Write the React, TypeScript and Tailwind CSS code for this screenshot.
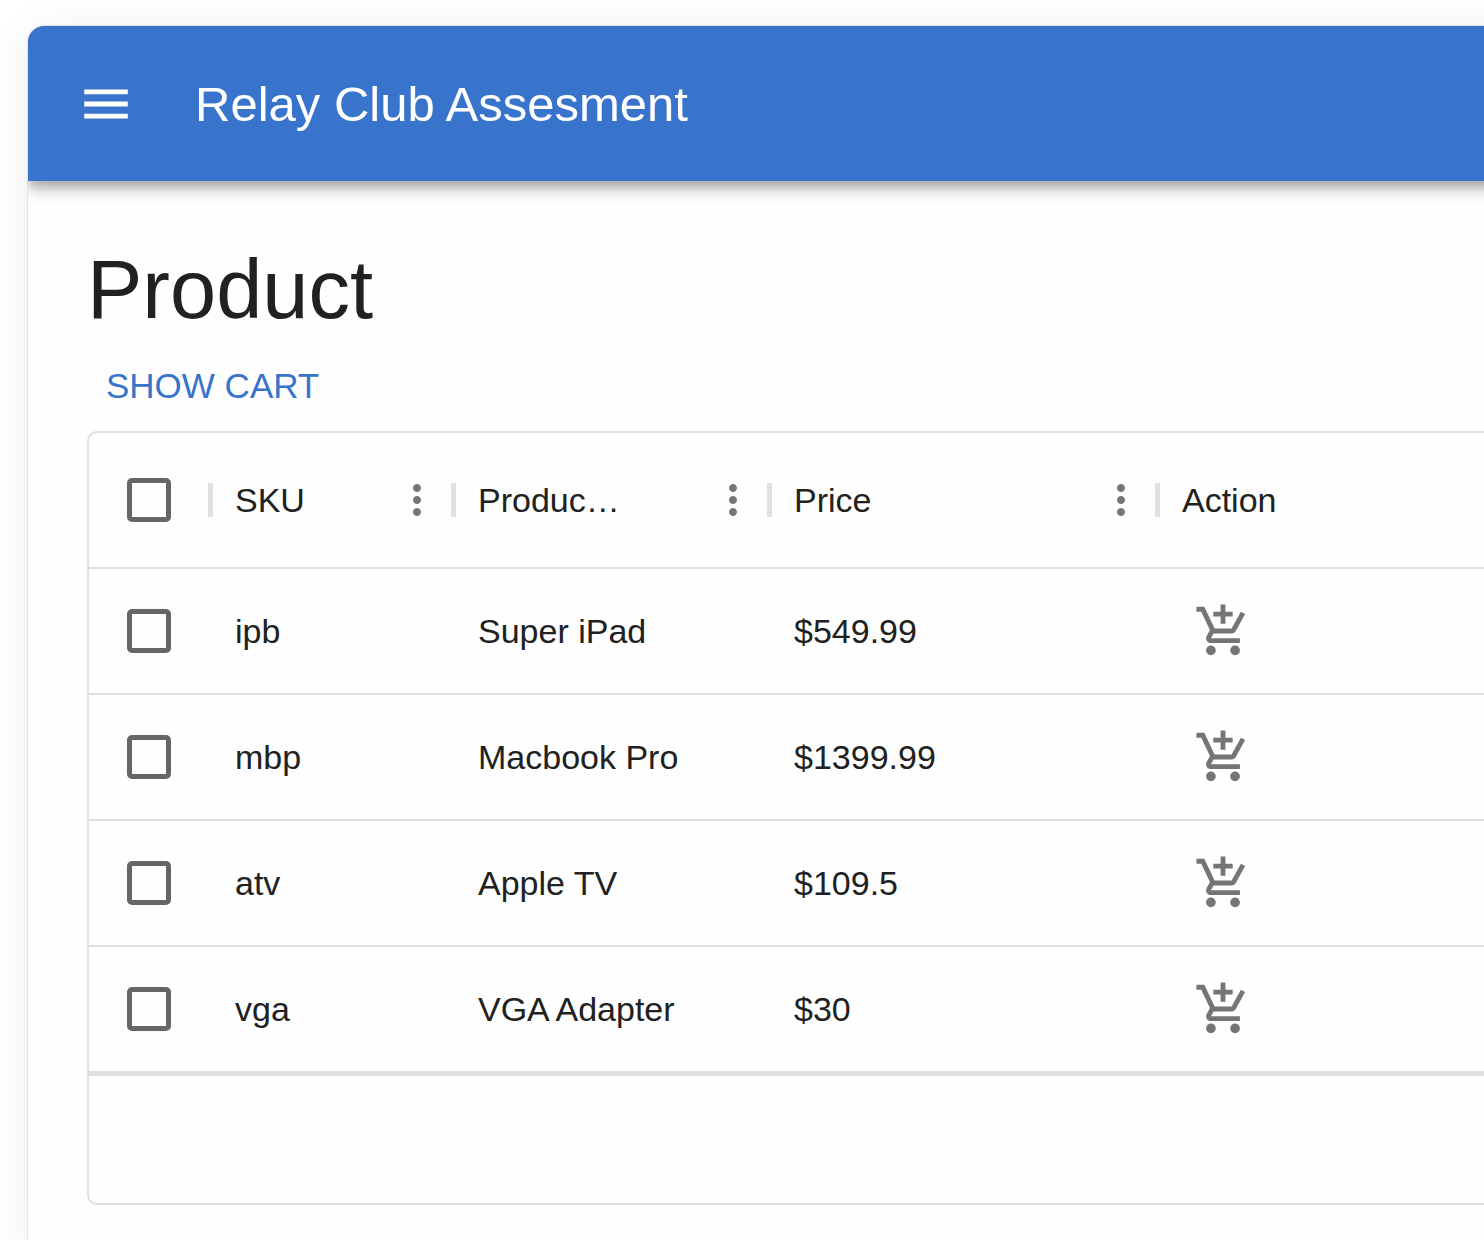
type Product = { sku: string; name: string; price: string };

const products: Product[] = [
  { sku: "ipb", name: "Super iPad", price: "$549.99" },
  { sku: "mbp", name: "Macbook Pro", price: "$1399.99" },
  { sku: "atv", name: "Apple TV", price: "$109.5" },
  { sku: "vga", name: "VGA Adapter", price: "$30" },
];

const columns = [
  { label: "SKU", menu: true },
  { label: "Produc…", menu: true },
  { label: "Price", menu: true },
  { label: "Action", menu: false },
];

function MenuIcon() {
  return (
    <svg viewBox="0 0 24 24" fill="currentColor" className="size-[58px]" aria-hidden="true">
      <path d="M3 18h18v-2H3v2zm0-5h18v-2H3v2zm0-7v2h18V6H3z" />
    </svg>
  );
}

function MoreIcon() {
  return (
    <svg viewBox="0 0 24 24" fill="currentColor" className="size-12" aria-hidden="true">
      <path d="M12 8c1.1 0 2-.9 2-2s-.9-2-2-2-2 .9-2 2 .9 2 2 2zm0 2c-1.1 0-2 .9-2 2s.9 2 2 2 2-.9 2-2-.9-2-2-2zm0 6c-1.1 0-2 .9-2 2s.9 2 2 2 2-.9 2-2-.9-2-2-2z" />
    </svg>
  );
}

function AddCartIcon() {
  return (
    <svg viewBox="0 0 24 24" fill="currentColor" className="size-[58px]" aria-hidden="true">
      <path d="M11 9h2V6h3V4h-3V1h-2v3H8v2h3v3zm-4 9c-1.1 0-1.99.9-1.99 2S5.9 22 7 22s2-.9 2-2-.9-2-2-2zm10 0c-1.1 0-1.99.9-1.99 2s.89 2 1.99 2 2-.9 2-2-.9-2-2-2zm-8.9-5h7.45c.75 0 1.41-.41 1.75-1.03l3.86-7.01L19.42 4l-3.87 7H8.53L4.27 2H1v2h2l3.6 7.59-1.35 2.44C4.52 15.37 5.48 17 7 17h12v-2H7l1.1-2z" />
    </svg>
  );
}

function Checkbox({ label }: { label: string }) {
  return (
    <input
      type="checkbox"
      aria-label={label}
      className="block size-11 appearance-none rounded-[5px] border-5 border-[#666666] checked:bg-[#3874cb]"
    />
  );
}

export default function App() {
  return (
    <div className="min-h-screen overflow-hidden bg-white pt-[26px] pl-7 font-['Liberation_Sans',Arial,sans-serif] text-[#212121]">
      <div className="-mr-12 rounded-tl-2xl bg-[#fefefe] shadow-[0_0_1px_1px_rgba(0,0,0,0.08),0_8px_48px_rgba(0,0,0,0.08)]">
        <div className="min-h-[1214px] overflow-hidden rounded-tl-2xl">
          <header className="flex h-[155px] items-center gap-[60px] bg-[#3874cb] pl-[49px] text-white shadow-[0_5px_10px_-2px_rgba(0,0,0,0.2),0_10px_12px_rgba(0,0,0,0.14),0_2px_24px_rgba(0,0,0,0.12)]">
            <button type="button" aria-label="Open menu" className="shrink-0">
              <MenuIcon />
            </button>
            <div className="text-[49px] leading-[78px]">Relay Club Assesment</div>
          </header>

          <main className="pt-[58px] pl-[59px]">
            <h1 className="text-[83px] leading-[102px]">Product</h1>
            <button type="button" className="block h-[90px] px-[19px] text-[35px] leading-[60px] text-[#3874cb]">
              SHOW CART
            </button>

            <section className="rounded-l-[10px] border-2 border-r-0 border-[#e0e0e0]">
              <table className="w-full table-fixed border-separate border-spacing-0 text-left text-[34px] leading-[48px]">
                <colgroup>
                  <col className="w-[119px]" />
                  <col className="w-[243px]" />
                  <col className="w-[316px]" />
                  <col className="w-[388px]" />
                  <col />
                </colgroup>
                <thead>
                  <tr className="h-[136px]">
                    <th className="border-b-2 border-[#e0e0e0] pl-[38px]">
                      <Checkbox label="Select all rows" />
                    </th>
                    {columns.map((column) => (
                      <th key={column.label} className="border-b-2 border-[#e0e0e0] font-normal">
                        <div className="flex items-center">
                          <span className="mr-[22px] h-[34px] w-[5px] shrink-0 bg-[#e0e0e0]" />
                          <span className="flex-1 truncate">{column.label}</span>
                          {column.menu && (
                            <button type="button" aria-label={`${column.label} menu`} className="mr-[10px] text-[#757575]">
                              <MoreIcon />
                            </button>
                          )}
                        </div>
                      </th>
                    ))}
                  </tr>
                </thead>
                <tbody>
                  {products.map((product) => (
                    <tr key={product.sku} className="h-[126px]">
                      <td className="border-b-2 border-[#e0e0e0] pl-[38px]">
                        <Checkbox label={`Select ${product.name}`} />
                      </td>
                      <td className="border-b-2 border-[#e0e0e0] pl-[27px]">{product.sku}</td>
                      <td className="border-b-2 border-[#e0e0e0] pl-[27px]">{product.name}</td>
                      <td className="border-b-2 border-[#e0e0e0] pl-[27px]">{product.price}</td>
                      <td className="border-b-2 border-[#e0e0e0] pl-[39px]">
                        <button type="button" aria-label={`Add ${product.name} to cart`} className="block text-[#757575]">
                          <AddCartIcon />
                        </button>
                      </td>
                    </tr>
                  ))}
                </tbody>
              </table>
              <footer className="h-[130px] border-t-3 border-[#e0e0e0]" />
            </section>
          </main>
        </div>
      </div>
    </div>
  );
}
